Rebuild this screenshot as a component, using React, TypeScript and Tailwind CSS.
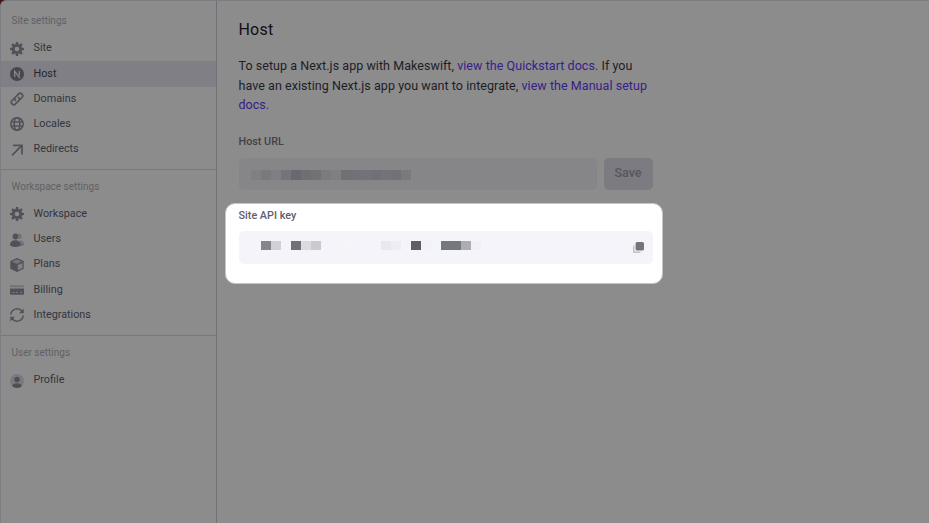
import type { ReactNode } from "react";

const DARK = "#51515a";
const LIGHT = "#717178";

function Icon({ children }: { children: ReactNode }) {
  return (
    <svg viewBox="0 0 14 14" className="block h-3.5 w-3.5 shrink-0" fill="none">
      {children}
    </svg>
  );
}

const GearIcon = () => (
  <Icon>
    <circle cx="7" cy="7" r="3.7" stroke={DARK} strokeWidth="2.8" />
    {[0, 45, 90, 135, 180, 225, 270, 315].map((a) => (
      <path key={a} d="M5.5 2.6 5.900 0h2.200l.4 2.600z" fill={DARK} transform={`rotate(${a} 7 7)`} />
    ))}
  </Icon>
);

const NextIcon = () => (
  <Icon>
    <circle cx="7" cy="7" r="7" fill="#47474f" />
    <path d="M4.700 10V4.200l5.200 7M9.300 4v4.600" stroke="#8c8c92" strokeWidth="1.200" />
  </Icon>
);

const LinkIcon = () => (
  <Icon>
    <g stroke={DARK} strokeWidth="1.700" strokeLinecap="round">
      <path d="M5.500 8.500a2.500 2.500 0 0 1 0-3.500l3.200-3.200a2.500 2.500 0 0 1 3.500 3.500L10 7.500" />
      <path d="M8.500 5.500a2.500 2.500 0 0 1 0 3.500l-3.200 3.200a2.500 2.500 0 0 1-3.500-3.500L4 6.500" />
    </g>
  </Icon>
);

const GlobeIcon = () => (
  <Icon>
    <g stroke={DARK} strokeWidth="1.500">
      <circle cx="7" cy="7" r="6.200" />
      <ellipse cx="7" cy="7" rx="2.800" ry="6.200" />
      <path d="M1 4.900h12M1 9.100h12" />
    </g>
  </Icon>
);

const ArrowIcon = () => (
  <Icon>
    <path d="M3 2.400h9v9M11.700 2.700 2 12.400" stroke={DARK} strokeWidth="1.700" />
  </Icon>
);

const UsersIcon = () => (
  <Icon>
    <path d="M8 .9a2.700 2.700 0 1 1 1 5.200zM10 7.300c2.500.2 4 1.900 4 4.300 0 .8-.6 1.400-1.500 1.400H10z" fill={LIGHT} />
    <circle cx="5.500" cy="3.500" r="2.900" fill={DARK} />
    <path d="M0 11.800C0 9 2 7.200 5.300 7.200s5.400 1.800 5.400 4.600c0 1.300-2 2.200-5.400 2.200S0 13.100 0 11.800z" fill={DARK} />
  </Icon>
);

const BoxIcon = () => (
  <Icon>
    <path d="M7 0 13.700 3v7.700L7 14 .3 10.700V3z" fill={DARK} />
    <path d="m7 1.400 5 2.200-5 2.300-5-2.300z" fill="#74747b" />
    <path d="m7.800 7.100 4.700-2.200v5l-4.700 2.300z" fill="#818186" />
  </Icon>
);

const CardIcon = () => (
  <Icon>
    <path d="M0 3.600c0-.8.500-1.300 1.300-1.300h11.400c.8 0 1.300.5 1.300 1.300v.6H0z" fill={LIGHT} />
    <path d="M0 5.400h14v5c0 .8-.5 1.300-1.300 1.300H1.300C.5 11.700 0 11.200 0 10.400z" fill={DARK} />
    <path d="M2 9.400h3M6 9.400h2M10 9.400h2" stroke="#77777d" />
  </Icon>
);

const SyncIcon = () => (
  <Icon>
    <path d="M.8 6.500A6.200 6.200 0 0 1 12 3.500M13.200 7.500A6.200 6.200 0 0 1 2 10.500" stroke={DARK} strokeWidth="1.500" />
    <path d="M13.700.500v4.800H9zM.3 13.500V8.700H5z" fill={DARK} />
  </Icon>
);

const ProfileIcon = () => (
  <Icon>
    <circle cx="7" cy="7" r="7" fill="#79797e" />
    <circle cx="7" cy="5.500" r="2.700" fill="#4e4e57" />
    <path d="M2 11.900c1-1.900 2.800-2.600 5-2.600s4 .7 5 2.600a7 7 0 0 1-10 0z" fill="#4e4e57" />
  </Icon>
);

function Item({ icon, label, active }: { icon: ReactNode; label: string; active?: boolean }) {
  return (
    <li
      className={`flex h-[25.2px] items-center gap-[9.5px] pl-[9px] text-[10.8px] leading-[16px] ${
        active ? "bg-[#7f7f85] text-[#26262d]" : "text-[#34343d]"
      }`}
    >
      {icon}
      <span className="pb-px">{label}</span>
    </li>
  );
}

function Group({ title, children }: { title: string; children: ReactNode }) {
  return (
    <section className="border-b border-[#77777d] pb-[6.7px] pt-2 first:pt-[11.35px] last:border-b-0 nth-2:pb-[7.2px]">
      <h2 className="mb-[6.45px] h-[17.5px] pl-[10.5px] text-[10px] leading-[18px] text-[#606067]">{title}</h2>
      <ul>{children}</ul>
    </section>
  );
}

const urlBlocks = ["#808083", "#7a7a7e", "#7e7f83", "#74757a", "#68686f", "#6e6e73", "#717176", "#7b7b7e", "#7d7f82", "#707074", "#717277", "#727378", "#707176", "#737479", "#717176", "#797a7e"];
const keyBlocks = ["#f6f4f9", "#85868c", "#d0d0d8", "#f5f4fa", "#717277", "#dbdce0", "#cacbcf", "#f5f4fa", "#f5f4fa", "#f6f5f9", "#f5f4fa", "#f5f4fa", "#f5f4fa", "#e9e8ee", "#efedf3", "#f3f5fa", "#5e5f63", "#f1f3f9", "#f4f5fa", "#73777e", "#77787c", "#acadb5", "#f2f0f5"];

function Mosaic({ colors, height }: { colors: string[]; height: number }) {
  return (
    <div className="flex" style={{ height }}>
      {colors.map((c, i) => (
        <span key={i} className="h-full w-2.5" style={{ backgroundColor: c }} />
      ))}
    </div>
  );
}

export default function App() {
  return (
    <div className="h-[523px] w-[929px] overflow-hidden bg-[#421414] font-['Roboto',sans-serif]">
      <div className="flex h-full overflow-hidden rounded-tl-[6px] border-l border-t border-[#7c7c83] bg-[#8c8c8c]">
        <nav className="w-[216px] shrink-0 border-r border-[#707074]">
          <Group title="Site settings">
            <Item icon={<GearIcon />} label="Site" />
            <Item icon={<NextIcon />} label="Host" active />
            <Item icon={<LinkIcon />} label="Domains" />
            <Item icon={<GlobeIcon />} label="Locales" />
            <Item icon={<ArrowIcon />} label="Redirects" />
          </Group>
          <Group title="Workspace settings">
            <Item icon={<GearIcon />} label="Workspace" />
            <Item icon={<UsersIcon />} label="Users" />
            <Item icon={<BoxIcon />} label="Plans" />
            <Item icon={<CardIcon />} label="Billing" />
            <Item icon={<SyncIcon />} label="Integrations" />
          </Group>
          <Group title="User settings">
            <Item icon={<ProfileIcon />} label="Profile" />
          </Group>
        </nav>

        <main className="w-[446px] pl-2 pt-[19px]">
          <div className="pl-[13.5px]">
            <h1 className="text-[16px] leading-[20px] tracking-[0.2px] text-[#101015]">Host</h1>
            <p className="mt-[16px] whitespace-nowrap text-[12.5px] leading-[19.6px] tracking-[0.05px] text-[#1d1d27]">
              To setup a Next.js app with Makeswift, <a className="text-[#35208a]">view the Quickstart docs.</a> If you
              <br />
              have an existing Next.js app you want to integrate, <a className="text-[#35208a]">view the Manual setup</a>
              <br />
              <a className="text-[#35208a]">docs.</a>
            </p>
            <div className="mt-[19px] text-[10.8px] font-medium leading-[16px] text-[#42424a]">Host URL</div>
            <div className="ml-[0.5px] mt-[8.2px] flex gap-[7px]">
              <div className="flex h-8 w-[358px] items-start rounded-[5px] bg-[#868688] pl-3 pt-3">
                <Mosaic colors={urlBlocks} height={10} />
              </div>
              <button className="h-8 w-[49px] rounded-[5px] bg-[#7c7b82] pb-[1.5px] pr-px text-[12.5px] font-medium text-[#56565c]">
                Save
              </button>
            </div>
          </div>

          <section className="mt-[13px] h-[81px] w-[438px] rounded-[10px] border border-[#c5c5c5] bg-white pl-3 pt-[4px]">
            <div className="pl-[0.5px] text-[10.8px] font-medium leading-[16px] text-[#5f606c]">Site API key</div>
            <div className="ml-[0.5px] mt-[7px] flex h-[33px] w-[414.5px] items-start justify-between rounded-[5px] bg-[#f5f4fa] pl-[12.5px] pr-[9px] pt-[10px]">
              <Mosaic colors={keyBlocks} height={9} />
              <svg viewBox="0 0 11 11" className="mt-px h-[11px] w-[11px]">
                <path d="M0 4.500Q0 3.200 1.500 3.200V8q0 1.500 1.500 1.500h4.800q0 1.500-1.300 1.500H1.500Q0 11 0 9.500z" fill="#c2c2c6" />
                <rect x="2.600" y="0" width="8.400" height="8.400" rx="1.500" fill="#757579" />
              </svg>
            </div>
          </section>
        </main>
      </div>
    </div>
  );
}
